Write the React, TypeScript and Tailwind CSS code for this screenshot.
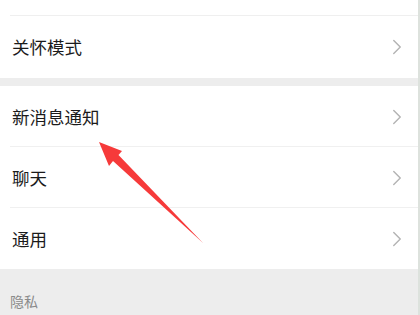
import { ChevronRight } from "lucide-react";

const font = { fontFamily: '"Noto Sans CJK SC", "Noto Sans", sans-serif' };

const Chevron = () => (
  <ChevronRight className="h-[26px] w-[26px] text-[#b3b3b3]" strokeWidth={1.3} />
);

const Row = ({ label, last }: { label: string; last?: boolean }) => (
  <div className="relative flex h-[61px] items-center justify-between pl-3 pr-[8px]">
    <span className="text-[17.5px] leading-none text-[#1b1b1b]">{label}</span>
    <Chevron />
    {!last && <div className="absolute bottom-0 left-[10px] right-0 h-px bg-[#f0f0f0]" />}
  </div>
);

export default function App() {
  return (
    <div className="relative flex h-[315px] w-[420px] overflow-hidden bg-[#ededed]" style={font}>
      <div className="flex flex-1 flex-col">
        <div className="bg-white">
          <div className="relative h-[16px]">
            <div className="absolute bottom-0 left-[10px] right-0 h-px bg-[#efefef]" />
          </div>
          <div className="flex h-[62px] items-center justify-between pl-3 pr-[8px]">
            <span className="text-[17.5px] leading-none text-[#1b1b1b]">关怀模式</span>
            <Chevron />
          </div>
        </div>
        <div className="h-[8px]" />
        <div className="bg-white">
          <Row label="新消息通知" />
          <Row label="聊天" />
          <Row label="通用" last />
        </div>
        <div className="flex h-[46px] items-end pb-[7px] pl-[10px]">
          <span className="text-[14px] leading-none text-[#8a8a8a]">隐私</span>
        </div>
      </div>
      <div className="w-[2px] bg-[#dde2dd]" />
      <svg className="pointer-events-none absolute left-0 top-0" width="420" height="315">
        <polygon points="99,142 122,151 118.5,155 203,243 113,161 109,166" fill="#f63a3a" />
      </svg>
    </div>
  );
}
